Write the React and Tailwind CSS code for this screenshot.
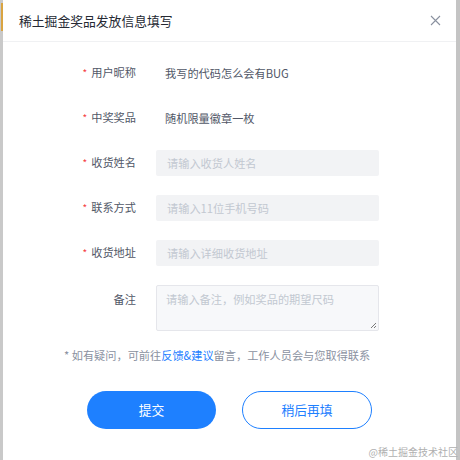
export default function App() {
  const font = { fontFamily: '"Noto Sans CJK SC", "Noto Sans", sans-serif' };
  const Label = ({ req, children }) => (
    <div className="w-[133px] flex items-center justify-end text-[11.2px] text-[#515767] leading-none">
      {req && <span className="text-[#f53f3f] mr-[4px] text-[10px]">*</span>}
      <span>{children}</span>
    </div>
  );
  return (
    <div className="w-[460px] h-[460px] flex bg-white relative overflow-hidden" style={font}>
      <div className="w-[3px] flex flex-col bg-[#c9c9c9]">
        <div className="h-[3px]" />
        <div className="h-[28px] w-[2px] ml-[1px] bg-[#d9a441]" />
      </div>
      <div className="flex-1 flex flex-col bg-white">
        <div className="h-[42px] flex items-center justify-between pl-[16px] pr-[15px] border-b border-[#f0f1f3]">
          <span className="text-[12.8px] text-[#252933]">稀土掘金奖品发放信息填写</span>
          <svg width="11" height="11" viewBox="0 0 11 11" className="mt-[-1px]">
            <path d="M1 1L10 10M10 1L1 10" stroke="#8a919f" strokeWidth="1.1" />
          </svg>
        </div>
        <div className="flex flex-col gap-[19px] pt-[18px]">
          <div className="flex h-[26px]">
            <Label req>用户昵称</Label>
            <div className="ml-[29px] flex items-center text-[11.2px] text-[#515767]">我写的代码怎么会有BUG</div>
          </div>
          <div className="flex h-[26px]">
            <Label req>中奖奖品</Label>
            <div className="ml-[29px] flex items-center text-[11.2px] text-[#515767]">随机限量徽章一枚</div>
          </div>
          <div className="flex h-[26px]">
            <Label req>收货姓名</Label>
            <div className="ml-[20px] w-[223px] h-[26px] rounded-[2px] bg-[#f2f3f5] flex items-center pl-[11px] text-[11.2px] text-[#c2c8d1]">请输入收货人姓名</div>
          </div>
          <div className="flex h-[26px]">
            <Label req>联系方式</Label>
            <div className="ml-[20px] w-[223px] h-[26px] rounded-[2px] bg-[#f2f3f5] flex items-center pl-[11px] text-[11.2px] text-[#c2c8d1]">请输入11位手机号码</div>
          </div>
          <div className="flex h-[26px]">
            <Label req>收货地址</Label>
            <div className="ml-[20px] w-[223px] h-[26px] rounded-[2px] bg-[#f2f3f5] flex items-center pl-[11px] text-[11.2px] text-[#c2c8d1]">请输入详细收货地址</div>
          </div>
          <div className="flex h-[46px]">
            <div className="w-[133px] flex justify-end pt-[9px] text-[11.2px] text-[#515767] leading-none">备注</div>
            <div className="ml-[20px] w-[223px] h-[46px] rounded-[2px] bg-[#f7f8fa] border border-[#e5e6eb] relative pl-[9px] pt-[8px] text-[11.2px] text-[#c2c8d1] leading-none">
              请输入备注，例如奖品的期望尺码
              <svg width="7" height="7" viewBox="0 0 7 7" className="absolute right-[1px] bottom-[1px]">
                <path d="M6 1L1 6M6 4L4 6" stroke="#6b6b6b" strokeWidth="0.9" />
              </svg>
            </div>
          </div>
        </div>
        <div className="mt-[16px] pl-[61px] text-[11.2px] text-[#8a919f] leading-[16px] whitespace-nowrap">
          * 如有疑问，可前往<span className="text-[#1e80ff]">反馈&amp;建议</span>留言，工作人员会与您取得联系
        </div>
        <div className="mt-[28px] flex justify-center gap-[26px]">
          <div className="w-[129px] h-[38px] rounded-full bg-[#1e80ff] flex items-center justify-center text-white text-[12.8px]">提交</div>
          <div className="w-[130px] h-[38px] rounded-full border border-[#1e80ff] flex items-center justify-center text-[#1e80ff] text-[12.8px]">稍后再填</div>
        </div>
      </div>
      <div className="w-[4px] bg-[#c4c4c4]" />
      <div className="absolute right-[2px] bottom-[3px] text-[10px] text-[#b0b0b0] leading-none">@稀土掘金技术社区</div>
    </div>
  );
}
